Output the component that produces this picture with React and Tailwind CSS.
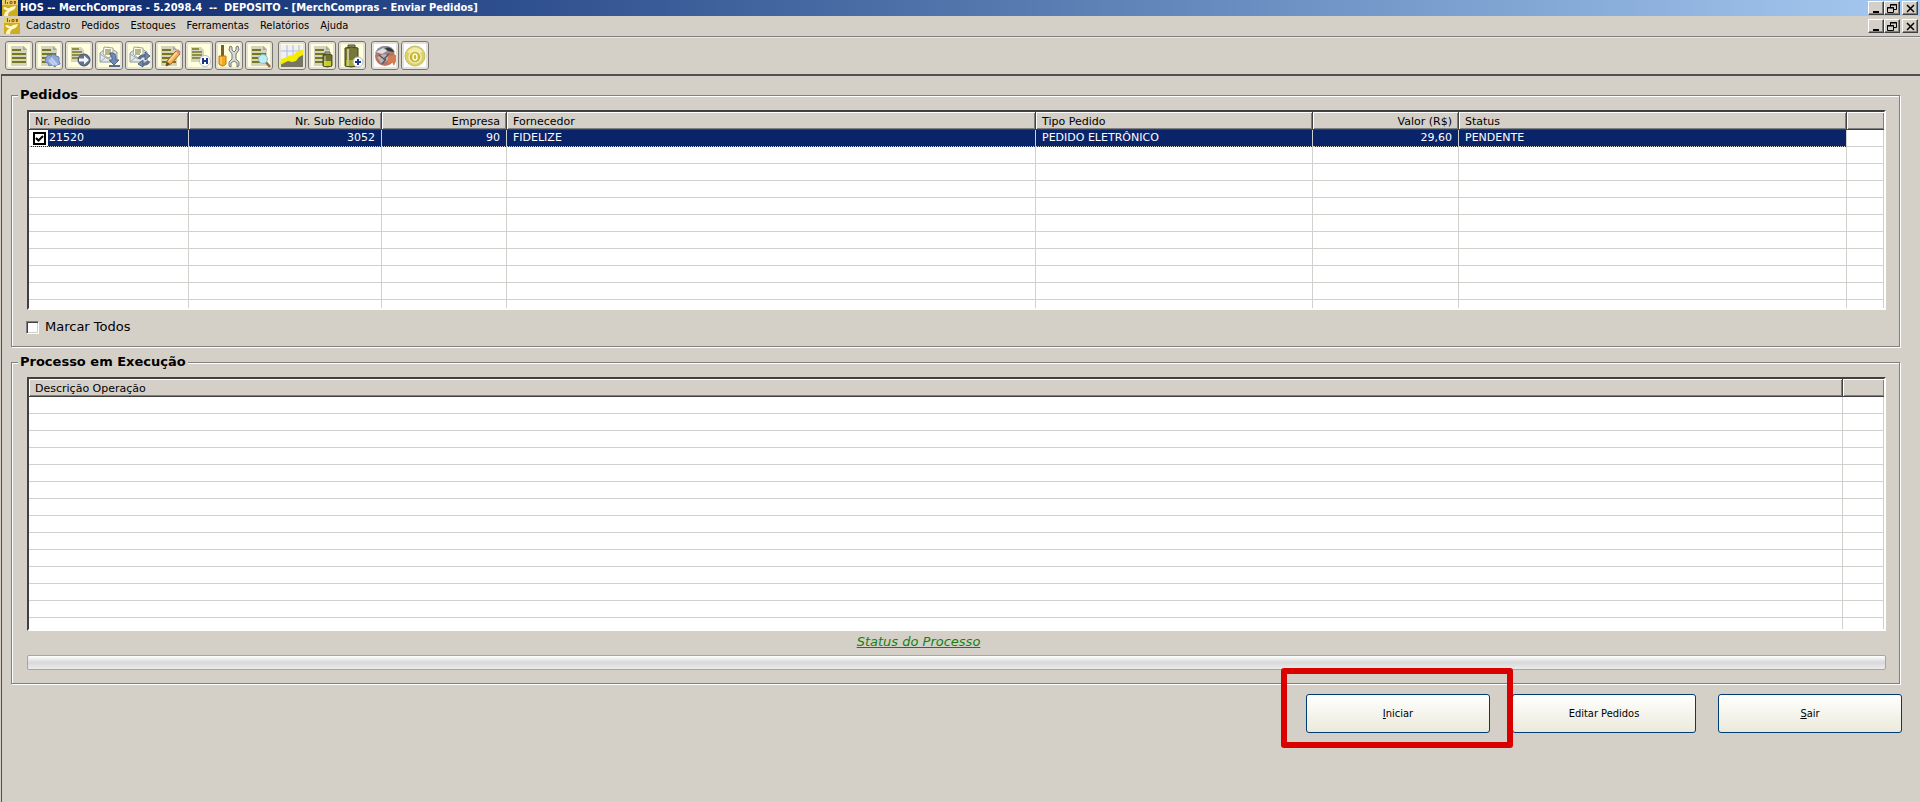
import React from 'react';

const Icon = ({ children }) => (
  <svg viewBox="0 0 24 24" className="w-6 h-6" aria-hidden="true">
    {children}
  </svg>
);

const Sheet = ({ small }) =>
  small ? (
    <g>
      <path d="M4 3h10l3 3v12H4z" fill="#d5d5c4" />
      <path d="M5 5h7M5 8h10M5 11h10M5 14h10" stroke="#77771d" strokeWidth="1.5" />
    </g>
  ) : (
    <g>
      <path d="M4 2h13l3 3v17H4z" fill="#d3d3c2" />
      <path d="M16 2l4 4h-4z" fill="#aaa99b" />
      <path d="M5 6h9M5 10h14M5 14h14M5 18h14" stroke="#77771d" strokeWidth="2" />
    </g>
  );

const Envelope = () => (
  <g>
    <path d="M3 9l8-6 9 5v10H3z" fill="#e5e9ed" stroke="#8c96a0" />
    <path d="M6 10l1-7 9 1v7l-5 3z" fill="#fffff0" stroke="#a5a58c" />
    <path d="M8 6h6M8 8h6M8 10h5" stroke="#6c7025" />
    <path d="M3 10l8 5 9-6M3 18l6-5" fill="none" stroke="#9da8b0" />
  </g>
);

const icons = {
  lista: <Sheet />,
  config: (
    <g>
      <Sheet />
      <path d="M9 14l2-3 3 1 2-2 3 2 3 1v4l1 3-3 1-2 2-3-2-3 1-1-3-3-1z" fill="#91a7d8" stroke="#6681bc" />
      <path d="M14 14l6 7M12 16l5 5" stroke="#c6d3ef" strokeWidth="2" />
    </g>
  ),
  enviar: (
    <g>
      <Sheet small />
      <circle cx="17" cy="16" r="6" fill="#63738f" stroke="#455468" />
      <path d="M12 14.5h5v-3l5 4.5-5 4.5v-3h-5z" fill="#f4f7ff" />
    </g>
  ),
  receber: (
    <g>
      <Envelope />
      <path d="M13 9q6-1 6 5v2h3l-5 5-5-5h3v-2q0-3-2-3z" fill="#7189b4" stroke="#4f6388" />
      <path d="M12 22h11" stroke="#536b95" strokeWidth="2" />
    </g>
  ),
  sincronizar: (
    <g>
      <Envelope />
      <path d="M12 15q2-4 7-3" fill="none" stroke="#5c7199" strokeWidth="3" />
      <path d="M18 8l5 4-5 4z" fill="#7188af" stroke="#4e6284" />
      <path d="M22 17q-2 4-7 3" fill="none" stroke="#5c7199" strokeWidth="3" />
      <path d="M16 16l-5 4 5 3z" fill="#7188af" stroke="#4e6284" />
    </g>
  ),
  editar: (
    <g>
      <Sheet />
      <path d="M10 17l9-10 4 3-9 10-5 2z" fill="#f5b352" stroke="#9b622d" />
      <path d="M12 17l8-9" stroke="#ffe0a0" strokeWidth="1.5" />
      <path d="M19 7l2-2 3 3-2 2z" fill="#da8588" />
      <path d="M9 22l1-4 3 2z" fill="#55492f" />
    </g>
  ),
  historico: (
    <g>
      <Sheet small />
      <circle cx="18" cy="17" r="5.5" fill="#fff" stroke="#b8bdc9" />
      <path d="M16 14v6M20 14v6M16 17h4" stroke="#173786" strokeWidth="2" />
    </g>
  ),
  ferramentas: (
    <g>
      <path d="M4 1h3v12H4z" fill="#77602a" />
      <path d="M2 12h7v8q-3 4-7 0z" fill="#f4aa20" stroke="#bf7710" />
      <path d="M4 13v7" stroke="#ffe27c" />
      <path
        d="M13 2l-1 4 3 4v5l-3 3v4l2 1v-4l3-2 3 2v4l2-1v-4l-3-3v-5l3-4-1-4-2 1v3l-2 2-2-2V3z"
        fill="#d5dad7"
        stroke="#737976"
      />
    </g>
  ),
  consultar: (
    <g>
      <Sheet />
      <path d="M18 17l5 6" stroke="#936a35" strokeWidth="2.5" />
      <circle cx="16" cy="15" r="4.5" fill="#bceef8" stroke="#8ebfcc" />
    </g>
  ),
  grafico: (
    <g>
      <path d="M1 1h22v22H1z" fill="#eef0fa" />
      <path d="M1 7h22M7 1v20M13 1v20M19 1v20" stroke="#b4b9cf" />
      <path d="M1 17l8-3 5 1 9-8v16H1z" fill="#767565" />
      <path d="M1 15l6-2 3-2 3 1 4-5 6-1v5l-4 2-3 4-4 1-4-1-8 4z" fill="#f4ed00" />
    </g>
  ),
  estoque: (
    <g>
      <Sheet />
      <path d="M15 8h5v3h-5z" fill="#c3c39a" stroke="#606034" />
      <path d="M13 11q4-2 9 0v11q-5 2-9 0z" fill="#6f7030" stroke="#48491e" />
      <path d="M14 17h7v5h-7z" fill="#c6cc22" />
      <path d="M15 12v10" stroke="#d2d2a3" />
    </g>
  ),
  adicionar: (
    <g>
      <path d="M8 1h7v3H8z" fill="#9b9b79" stroke="#4a4a24" />
      <path d="M5 4q6-2 13 0v18q-7 2-13 0z" fill="#77773a" stroke="#45451e" />
      <path d="M6 16h11v6H6z" fill="#a7ac20" />
      <path d="M8 5v17" stroke="#c5c598" strokeWidth="2" />
      <circle cx="18" cy="18" r="5" fill="#fff" stroke="#b3b6c0" />
      <path d="M15 18h6M18 15v6" stroke="#173786" strokeWidth="2" />
    </g>
  ),
  parceiros: (
    <g>
      <ellipse cx="12" cy="12" rx="10" ry="10" fill="#b9745c" />
      <path d="M2 9q2-6 9-7 8-1 11 6l-8 1z" fill="#8f8f96" />
      <path d="M3 8l7-4 4 3-5 3z" fill="#dfdfe2" />
      <path d="M12 4q6-2 9 4l-6-1z" fill="#33353d" />
      <path d="M4 13l7-3 6 2-3 5-6 2z" fill="#b5b6be" />
      <path d="M6 11l5 4 5-5M9 20l4-5" fill="none" stroke="#585b64" strokeWidth="1.5" />
      <path d="M15 12l8-1v6l-2 5-2-4-4 2z" fill="#d47c54" />
    </g>
  ),
  sair: (
    <g>
      <circle cx="12" cy="12" r="10" fill="#d9d06a" stroke="#c4bd70" />
      <path d="M4 8q8-9 16 0-8 4-16 0z" fill="#f1ebae" />
      <circle cx="12" cy="13" r="6" fill="#c5b72d" stroke="#f3edb0" strokeWidth="1.5" />
      <ellipse cx="12" cy="13" rx="2" ry="3" fill="none" stroke="#fffce0" strokeWidth="1.5" />
    </g>
  ),
};

const toolGroups = [
  {
    tone: 'bg-[#ffffdc]',
    items: [
      ['lista', 'Lista'],
      ['config', 'Configurar'],
      ['enviar', 'Enviar'],
      ['receber', 'Receber'],
      ['sincronizar', 'Sincronizar'],
      ['editar', 'Editar'],
      ['historico', 'Histórico'],
      ['ferramentas', 'Ferramentas'],
      ['consultar', 'Consultar'],
    ],
  },
  {
    tone: 'bg-[#ffffdc]',
    items: [
      ['grafico', 'Gráfico'],
      ['estoque', 'Estoque'],
      ['adicionar', 'Adicionar'],
    ],
  },
  {
    tone: 'bg-white',
    items: [
      ['parceiros', 'Parceiros'],
      ['sair', 'Fechar'],
    ],
  },
];

const Logo = () => (
  <svg viewBox="0 0 16 16" className="w-4 h-4 shrink-0" aria-hidden="true">
    <path d="M0 0h16v16H0z" fill="#cfae1e" />
    <path d="M0 0h16v5H0z" fill="#e8cf6c" />
    <path d="M3.5 0v4M5.5 2v2M8 1.5h2v2H8zM14 1.5h-2v1h1.500v1H12" fill="none" stroke="#a0501c" />
    <path d="M1 8q2-2 4 0 2 1 4-1l5-1q-1 4-5 5-3 1-3 5H2q0-4 4-6-2 1-5-2z" fill="#fff7ce" />
  </svg>
);

const glyphs = {
  Minimizar: <path d="M4 9h6v2H4z" fill="#000" />,
  Restaurar: (
    <path d="M5.5 5V2.500h6v5H9M5 3h7M2.500 5.500h6v5h-6zM2 6h7" fill="none" stroke="#000" />
  ),
  Fechar: <path d="M4 3l7 7M11 3l-7 7" stroke="#000" strokeWidth="1.5" />,
};

const WindowButton = ({ name }) => (
  <button
    type="button"
    aria-label={name}
    className="w-4 h-[14px] flex items-center justify-center bg-[#d4d0c8] border border-t-white border-l-white border-b-[#404040] border-r-[#404040] shadow-[inset_-1px_-1px_0_#808080]"
  >
    <svg viewBox="0 0 14 12" className="w-[14px] h-3 shrink-0">
      {glyphs[name]}
    </svg>
  </button>
);

const WindowButtons = () => (
  <div className="flex shrink-0 pr-[2px]">
    <WindowButton name="Minimizar" />
    <WindowButton name="Restaurar" />
    <div className="w-[2px]" />
    <WindowButton name="Fechar" />
  </div>
);

const Group = ({ title, className = '', children }) => (
  <fieldset
    className={`min-w-0 border border-[#808080] shadow-[1px_1px_0_#fff,inset_1px_1px_0_#fff] pl-[15px] pr-[13px] ${className}`}
  >
    <legend className="-ml-[9px] px-[2px] h-5 leading-5 text-[13px] font-bold bg-[#d4d0c8]">{title}</legend>
    {children}
  </fieldset>
);

const headCell =
  'h-[18px] p-0 px-[6px] pt-[2px] font-normal leading-[15px] bg-[#d4d0c8] border-r border-r-[#404040] border-b border-b-[#404040] shadow-[inset_1px_1px_0_#fff,inset_-1px_-1px_0_#808080] overflow-hidden whitespace-nowrap';
const bodyCell = 'h-[17px] p-0 px-[6px] leading-4 border-r border-b border-[#d0d0cc] whitespace-nowrap overflow-hidden';

const Grid = ({ columns, widths, children, className = '' }) => (
  <div
    className={`overflow-hidden bg-white border-2 border-t-[#404040] border-l-[#404040] border-b-white border-r-white ${className}`}
  >
    <table className="w-full table-fixed border-separate border-spacing-0 text-[11px]">
      <colgroup>
        {widths.map((w, i) => (
          <col key={i} className={w} />
        ))}
      </colgroup>
      <thead>
        <tr>
          {columns.map((c, i) => (
            <th
              key={i}
              className={`${headCell} ${c.right ? 'text-right' : 'text-left'} ${i === columns.length - 1 ? 'border-r-0' : ''}`}
            >
              {c.label}
            </th>
          ))}
        </tr>
      </thead>
      <tbody>{children}</tbody>
    </table>
  </div>
);

const EmptyRows = ({ count, cols }) =>
  Array.from({ length: count }, (_, r) => (
    <tr key={r}>
      {Array.from({ length: cols }, (_, c) => (
        <td key={c} className={bodyCell} />
      ))}
    </tr>
  ));

const pedidoColumns = [
  { label: 'Nr. Pedido' },
  { label: 'Nr. Sub Pedido', right: true },
  { label: 'Empresa', right: true },
  { label: 'Fornecedor' },
  { label: 'Tipo Pedido' },
  { label: 'Valor (R$)', right: true },
  { label: 'Status' },
  { label: '' },
];
const pedidoWidths = ['w-[160px]', 'w-[193px]', 'w-[125px]', 'w-auto', 'w-[277px]', 'w-[146px]', 'w-[388px]', 'w-[37px]'];
const pedido = ['21520', '3052', '90', 'FIDELIZE', 'PEDIDO ELETRÔNICO', '29,60', 'PENDENTE'];

const PedidoRow = () => (
  <tr className="text-white">
    {pedido.map((value, i) => (
      <td
        key={value}
        className={`${bodyCell} bg-[#0a246a] [border-bottom-style:dotted] ${pedidoColumns[i].right ? 'text-right' : ''} ${i === 0 ? 'pl-0!' : ''}`}
      >
        {i === 0 ? (
          <label className="flex items-center h-4">
            <span className="flex items-center bg-white h-4 pl-1 pr-[2px] mr-px">
              <input
                type="checkbox"
                defaultChecked
                className="peer appearance-none w-[13px] h-[13px] border-2 border-black bg-white"
              />
              <svg viewBox="0 0 9 9" className="w-[9px] h-[9px] -ml-[11px] mr-[2px] pointer-events-none hidden peer-checked:block">
                <path d="M1 4l2.500 2.500L8 2" fill="none" stroke="#000" strokeWidth="2" />
              </svg>
            </span>
            {value}
          </label>
        ) : (
          value
        )}
      </td>
    ))}
    <td className={bodyCell} />
  </tr>
);

const ActionButton = ({ children }) => (
  <button
    type="button"
    className="w-[184px] h-[39px] pt-[2px] rounded-[3px] border border-[#003c74] bg-linear-to-b from-white to-[#ebeadb] font-['DejaVu_Sans_Condensed','DejaVu_Sans',sans-serif] text-[11px]"
  >
    {children}
  </button>
);

export default function App() {
  return (
    <div className="min-h-screen flex flex-col bg-[#d4d0c8] text-black font-['DejaVu_Sans',sans-serif] overflow-hidden">
      <header className="font-['DejaVu_Sans_Condensed','DejaVu_Sans',sans-serif] text-[11px]">
        <div className="h-4 flex items-center bg-linear-to-r from-[#0a246a] to-[#a6caf0] text-white">
          <div className="pl-[2px]">
            <Logo />
          </div>
          <h1 className="flex-1 pl-[2px] font-bold whitespace-pre leading-4">
            {'HOS -- MerchCompras - 5.2098.4  --  DEPOSITO - [MerchCompras - Enviar Pedidos]'}
          </h1>
          <WindowButtons />
        </div>
        <div className="h-5 flex items-center">
          <div className="pl-1">
            <Logo />
          </div>
          <nav className="flex-1 flex gap-[11px] pl-[6px]">
            {['Cadastro', 'Pedidos', 'Estoques', 'Ferramentas', 'Relatórios', 'Ajuda'].map((item) => (
              <button key={item} type="button" className="leading-4">
                {item}
              </button>
            ))}
          </nav>
          <WindowButtons />
        </div>
        <div className="h-[38px] flex items-center gap-[5px] pl-[5px] border-t border-[#808080] shadow-[inset_0_1px_0_#e8e6e0]">
          {toolGroups.map((group, i) => (
            <div key={i} className="flex gap-[2px]">
              {group.items.map(([icon, label]) => (
                <button
                  key={icon}
                  type="button"
                  aria-label={label}
                  className={`w-7 h-[29px] flex items-center justify-center rounded-[3px] border border-[#77756f] shadow-[inset_0_0_0_2px_#e4e1d9] ${group.tone}`}
                >
                  <Icon>{icons[icon]}</Icon>
                </button>
              ))}
            </div>
          ))}
        </div>
      </header>

      <main className="flex-1 ml-px border-l border-t-2 border-[#505050] pl-[9px] pr-[18px] pt-[9px]">
        <div className="pr-[2px]">
          <Group title="Pedidos" className="h-[262px]">
            <Grid columns={pedidoColumns} widths={pedidoWidths} className="mt-[5px] h-[200px]">
              <PedidoRow />
              <EmptyRows count={10} cols={8} />
            </Grid>
            <label className="flex items-center gap-[6px] mt-[7px] -ml-px h-5 text-[13px] w-fit">
              <input
                type="checkbox"
                className="appearance-none w-[13px] h-[13px] bg-white border border-t-[#808080] border-l-[#808080] border-b-white border-r-white shadow-[inset_1px_1px_0_#404040,inset_-1px_-1px_0_#d4d0c8]"
              />
              Marcar Todos
            </label>
          </Group>

          <Group title="Processo em Execução" className="mt-[5px] h-[332px]">
            <Grid
              columns={[{ label: 'Descrição Operação' }, { label: '' }]}
              widths={['w-auto', 'w-[41px]']}
              className="mt-[5px] h-[254px]"
            >
              <EmptyRows count={14} cols={2} />
            </Grid>
            <p className="h-6 pr-[76px] leading-[22px] text-center text-[13px] italic underline text-[#128012]">
              Status do Processo
            </p>
            <div
              role="progressbar"
              aria-label="Status do Processo"
              className="h-[15px] rounded-[2px] border border-[#a5a5a5] bg-linear-to-b from-white via-[#d8d8d8] to-[#ececec]"
            />
          </Group>
        </div>

        <div className="flex justify-end gap-[22px] mt-[10px]">
          <div className="relative">
            <ActionButton>
              <u>I</u>niciar
            </ActionButton>
            <div className="absolute -left-[25px] -right-[23px] -top-[26px] -bottom-[15px] border-6 border-[#d90000] rounded-[3px] pointer-events-none z-10" />
          </div>
          <ActionButton>Editar Pedidos</ActionButton>
          <ActionButton>
            <u>S</u>air
          </ActionButton>
        </div>
      </main>
    </div>
  );
}
